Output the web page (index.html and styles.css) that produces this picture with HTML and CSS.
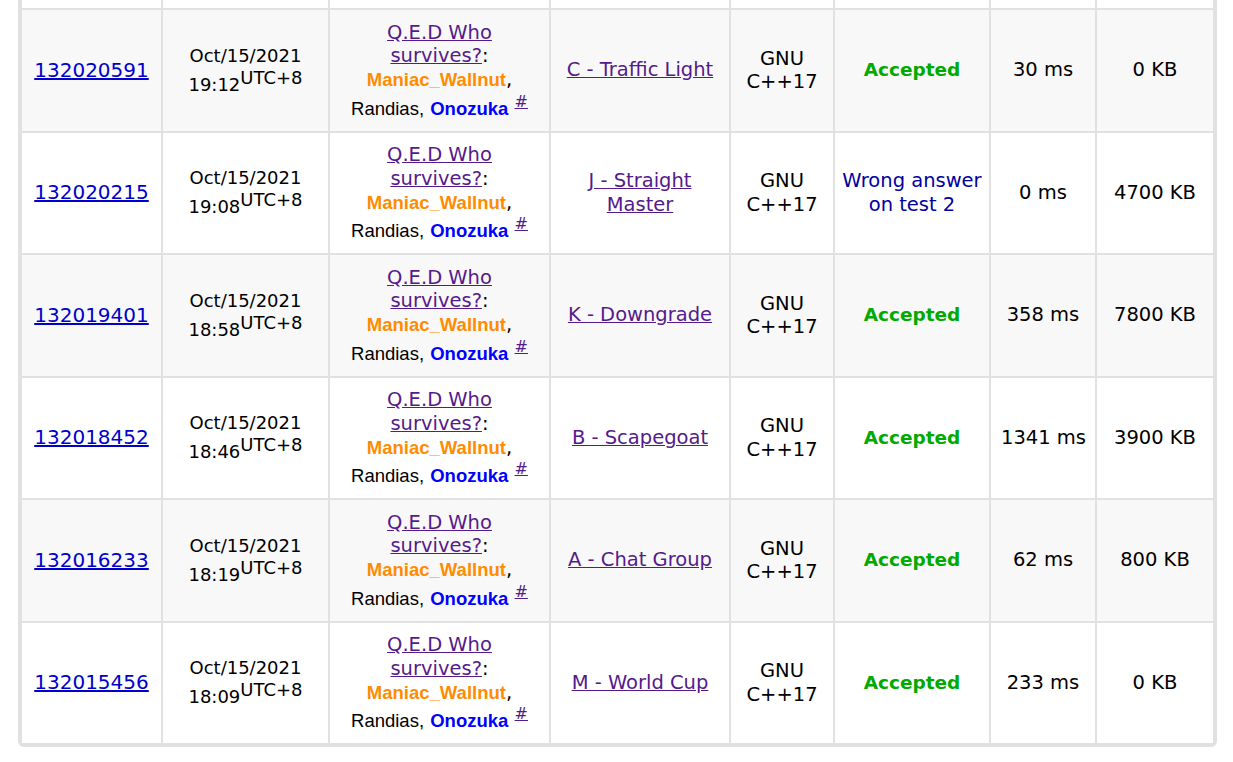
FILE: index.html
```html
<!DOCTYPE html>
<html lang="en">
<head>
<meta charset="utf-8">
<title>Status</title>
<link rel="stylesheet" href="styles.css">
</head>
<body>
<div class="frame">
  <table class="status">
    <colgroup>
      <col class="c-id"><col class="c-time"><col class="c-party"><col class="c-prob">
      <col class="c-lang"><col class="c-verdict"><col class="c-ms"><col class="c-mem">
    </colgroup>
    <tbody>
      <tr class="cut"><td></td><td></td><td></td><td></td><td></td><td></td><td></td><td></td></tr>

      <tr class="row dark">
        <td><a class="sid" href="#">132020591</a></td>
        <td class="time"><span>Oct/15/2021 19:12</span><sup>UTC+8</sup></td>
        <td class="party"><a class="v" href="#">Q.E.D Who survives?</a>: <a class="user orange" href="#">Maniac_Wallnut</a>, <span class="member">Randias,</span> <a class="user blue" href="#">Onozuka</a> <sup><a class="v hash" href="#">#</a></sup></td>
        <td class="prob"><a class="v" href="#">C - Traffic Light</a></td>
        <td class="lang">GNU C++17</td>
        <td class="verdict"><span class="ok">Accepted</span></td>
        <td>30&nbsp;ms</td>
        <td>0&nbsp;KB</td>
      </tr>

      <tr class="row">
        <td><a class="sid" href="#">132020215</a></td>
        <td class="time"><span>Oct/15/2021 19:08</span><sup>UTC+8</sup></td>
        <td class="party"><a class="v" href="#">Q.E.D Who survives?</a>: <a class="user orange" href="#">Maniac_Wallnut</a>, <span class="member">Randias,</span> <a class="user blue" href="#">Onozuka</a> <sup><a class="v hash" href="#">#</a></sup></td>
        <td class="prob"><a class="v" href="#">J - Straight Master</a></td>
        <td class="lang">GNU C++17</td>
        <td class="verdict"><span class="wa">Wrong answer on test 2</span></td>
        <td>0&nbsp;ms</td>
        <td>4700&nbsp;KB</td>
      </tr>

      <tr class="row dark">
        <td><a class="sid" href="#">132019401</a></td>
        <td class="time"><span>Oct/15/2021 18:58</span><sup>UTC+8</sup></td>
        <td class="party"><a class="v" href="#">Q.E.D Who survives?</a>: <a class="user orange" href="#">Maniac_Wallnut</a>, <span class="member">Randias,</span> <a class="user blue" href="#">Onozuka</a> <sup><a class="v hash" href="#">#</a></sup></td>
        <td class="prob"><a class="v" href="#">K - Downgrade</a></td>
        <td class="lang">GNU C++17</td>
        <td class="verdict"><span class="ok">Accepted</span></td>
        <td>358&nbsp;ms</td>
        <td>7800&nbsp;KB</td>
      </tr>

      <tr class="row">
        <td><a class="sid" href="#">132018452</a></td>
        <td class="time"><span>Oct/15/2021 18:46</span><sup>UTC+8</sup></td>
        <td class="party"><a class="v" href="#">Q.E.D Who survives?</a>: <a class="user orange" href="#">Maniac_Wallnut</a>, <span class="member">Randias,</span> <a class="user blue" href="#">Onozuka</a> <sup><a class="v hash" href="#">#</a></sup></td>
        <td class="prob"><a class="v" href="#">B - Scapegoat</a></td>
        <td class="lang">GNU C++17</td>
        <td class="verdict"><span class="ok">Accepted</span></td>
        <td>1341&nbsp;ms</td>
        <td>3900&nbsp;KB</td>
      </tr>

      <tr class="row dark">
        <td><a class="sid" href="#">132016233</a></td>
        <td class="time"><span>Oct/15/2021 18:19</span><sup>UTC+8</sup></td>
        <td class="party"><a class="v" href="#">Q.E.D Who survives?</a>: <a class="user orange" href="#">Maniac_Wallnut</a>, <span class="member">Randias,</span> <a class="user blue" href="#">Onozuka</a> <sup><a class="v hash" href="#">#</a></sup></td>
        <td class="prob"><a class="v" href="#">A - Chat Group</a></td>
        <td class="lang">GNU C++17</td>
        <td class="verdict"><span class="ok">Accepted</span></td>
        <td>62&nbsp;ms</td>
        <td>800&nbsp;KB</td>
      </tr>

      <tr class="row">
        <td><a class="sid" href="#">132015456</a></td>
        <td class="time"><span>Oct/15/2021 18:09</span><sup>UTC+8</sup></td>
        <td class="party"><a class="v" href="#">Q.E.D Who survives?</a>: <a class="user orange" href="#">Maniac_Wallnut</a>, <span class="member">Randias,</span> <a class="user blue" href="#">Onozuka</a> <sup><a class="v hash" href="#">#</a></sup></td>
        <td class="prob"><a class="v" href="#">M - World Cup</a></td>
        <td class="lang">GNU C++17</td>
        <td class="verdict"><span class="ok">Accepted</span></td>
        <td>233&nbsp;ms</td>
        <td>0&nbsp;KB</td>
      </tr>
    </tbody>
  </table>
</div>
</body>
</html>
```

FILE: styles.css
```css
html, body {
  margin: 0;
  padding: 0;
  background: #ffffff;
}

body {
  font-family: "DejaVu Sans", Verdana, sans-serif;
  font-size: 19.5px;
  color: #000000;
}

.frame {
  margin-left: 18px;
  width: 1195px;
  padding: 0 2px 2px 2px;
  background: #e1e1e1;
  border-radius: 0 0 6px 6px;
}

.status {
  width: 1195px;
  table-layout: fixed;
  border-collapse: collapse;
  background: #ffffff;
  border-top: none;
}

.c-id { width: 141px; }
.c-time { width: 167px; }
.c-party { width: 221px; }
.c-prob { width: 180px; }
.c-lang { width: 104px; }
.c-verdict { width: 156px; }
.c-ms { width: 106px; }
.c-mem { width: 118px; }

.status td {
  border: 2px solid #e1e1e1;
  text-align: center;
  vertical-align: middle;
  padding: 0 10px;
  line-height: 1.215;
}

.status tr.cut {
  height: 9px;
}

.status tr.cut td {
  border-top: none;
  padding: 0;
}

.status tr.row {
  height: 122.5px;
}

.status tr.dark td {
  background: #f8f8f8;
}

a {
  text-decoration: underline;
}

.sid {
  color: #0000cc;
  font-size: 20px;
}

.v {
  color: #551a8b;
}

.status td.time {
  font-size: 18px;
  padding: 0 6px;
}

.time sup {
  font-size: 100%;
}

.party sup {
  font-size: 16px;
}

.user {
  font-family: "Liberation Sans", Arial, sans-serif;
  font-weight: bold;
  font-size: 18.5px;
  text-decoration: none;
}

.orange { color: #ff8c00; }
.blue { color: #0000ff; }

.member {
  font-family: "Liberation Sans", Arial, sans-serif;
  font-size: 18.5px;
}

.status td.verdict {
  padding: 0 4px;
}

.ok {
  color: #00aa00;
  font-weight: bold;
  font-size: 18.5px;
}

.wa {
  color: #0000a0;
}
```
